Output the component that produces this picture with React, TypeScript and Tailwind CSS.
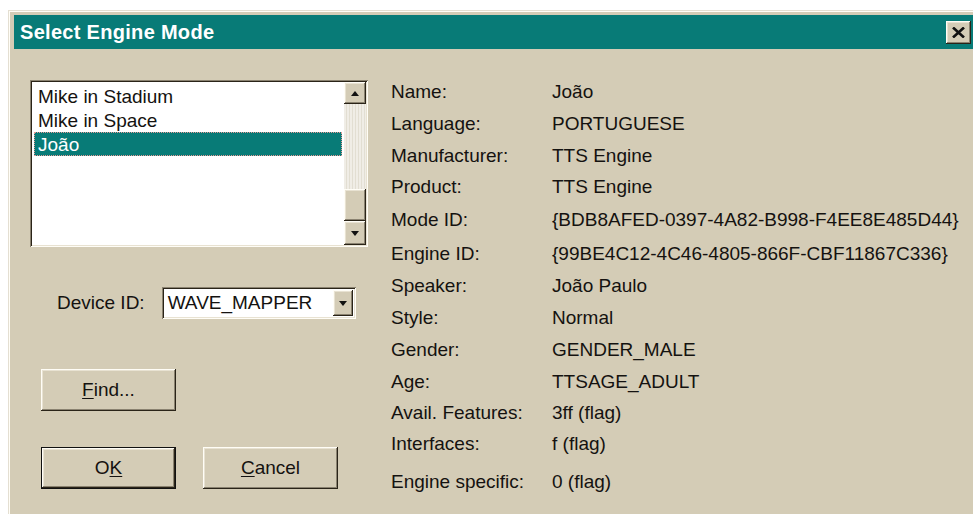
import { useState } from "react";

const raised =
  "bg-[#d4ccb6] shadow-[inset_-1px_-1px_0_#2a2418,inset_1px_1px_0_#fffdf6,inset_-2px_-2px_0_#8a8270,inset_2px_2px_0_#e8e2d2]";
const sunken =
  "shadow-[inset_1px_1px_0_#8a8270,inset_-1px_-1px_0_#fffdf6,inset_2px_2px_0_#2a2418,inset_-2px_-2px_0_#e8e2d2]";

const voices = ["Mike in Stadium", "Mike in Space", "João"];

const details = [
  { label: "Name:", value: "João", h: "h-[32px]" },
  { label: "Language:", value: "PORTUGUESE", h: "h-[32px]" },
  { label: "Manufacturer:", value: "TTS Engine", h: "h-[32px]" },
  { label: "Product:", value: "TTS Engine", h: "h-[30px]" },
  { label: "Mode ID:", value: "{BDB8AFED-0397-4A82-B998-F4EE8E485D44}", h: "h-[36px]" },
  { label: "Engine ID:", value: "{99BE4C12-4C46-4805-866F-CBF11867C336}", h: "h-[32px]" },
  { label: "Speaker:", value: "João Paulo", h: "h-[32px]" },
  { label: "Style:", value: "Normal", h: "h-[32px]" },
  { label: "Gender:", value: "GENDER_MALE", h: "h-[32px]" },
  { label: "Age:", value: "TTSAGE_ADULT", h: "h-[32px]" },
  { label: "Avail. Features:", value: "3ff (flag)", h: "h-[30px]" },
  { label: "Interfaces:", value: "f (flag)", h: "h-[32px]" },
  { label: "Engine specific:", value: "0 (flag)", h: "h-[44px]" },
];

function Arrow({ up }: { up?: boolean }) {
  return (
    <svg width="8" height="5" viewBox="0 0 8 5">
      <polygon points={up ? "4,0 8,5 0,5" : "0,0 8,0 4,5"} fill="#111" />
    </svg>
  );
}

function Button({
  children,
  primary,
  className = "",
}: {
  children: React.ReactNode;
  primary?: boolean;
  className?: string;
}) {
  return (
    <div
      className={`h-[42px] w-[135px] flex items-center justify-center ${
        primary ? "border border-[#111]" : ""
      } ${raised} ${className}`}
    >
      {children}
    </div>
  );
}

export default function App() {
  const [selected, setSelected] = useState(2);

  return (
    <div
      className="w-[973px] h-[514px] overflow-hidden bg-white pt-[10px] pl-[8px] text-[19px] text-[#141210]"
      style={{ fontFamily: '"Liberation Sans", Arial, sans-serif' }}
    >
      <div className="h-full bg-[#d4ccb6] pl-[6px] pt-[5px] shadow-[inset_1px_1px_0_#e4dfd2,inset_2px_2px_0_#fffdf6]">
        {/* title bar */}
        <div className="h-[34px] bg-[#087b77] flex items-center justify-between pl-[6px] pr-[2px]">
          <span className="text-white font-bold text-[20px] tracking-[0.3px]">Select Engine Mode</span>
          <div className={`w-[25px] h-[23px] flex items-center justify-center ${raised}`}>
            <svg width="13" height="11" viewBox="0 0 13 11">
              <path d="M1 0.5 L12 10.5 M12 0.5 L1 10.5" stroke="#111" strokeWidth="2.6" />
            </svg>
          </div>
        </div>

        <div className="flex pl-[16px]">
          {/* left column */}
          <div className="w-[338px] pt-[31px] flex flex-col">
            <div className={`h-[167px] bg-white p-[2px] flex ${sunken}`}>
              <div className="flex-1 pt-[2px] pl-[2px] pr-[2px]">
                {voices.map((v, i) => (
                  <div
                    key={v}
                    onClick={() => setSelected(i)}
                    className={`h-[24px] flex items-center pl-[4px] leading-none ${
                      selected === i
                        ? "bg-[#087b77] text-white outline-1 outline-dotted outline-[#e89a96] -outline-offset-1"
                        : ""
                    }`}
                  >
                    {v}
                  </div>
                ))}
              </div>
              <div className="w-[22px] flex flex-col">
                <div className={`h-[22px] flex items-center justify-center ${raised}`}>
                  <Arrow up />
                </div>
                <div className="flex-1 bg-[repeating-linear-gradient(90deg,#f0ede6_0px,#f0ede6_2px,#e2ded2_2px,#e2ded2_3px)]" />
                <div className={`h-[32px] ${raised}`} />
                <div className={`h-[24px] flex items-center justify-center ${raised}`}>
                  <Arrow />
                </div>
              </div>
            </div>

            <div className="mt-[40px] ml-[27px] flex items-center gap-[17px]">
              <span>Device ID:</span>
              <div className={`w-[194px] h-[32px] bg-white flex items-center p-[3px] ${sunken}`}>
                <span className="flex-1 pl-[3px]">WAVE_MAPPER</span>
                <div className={`w-[20px] h-[26px] flex items-center justify-center ${raised}`}>
                  <Arrow />
                </div>
              </div>
            </div>

            <Button className="mt-[50px] ml-[11px]">
              <span>
                <u className="underline-offset-2">F</u>ind...
              </span>
            </Button>

            <div className="mt-[36px] ml-[11px] flex gap-[27px]">
              <Button primary>
                <span>
                  O<u className="underline-offset-2">K</u>
                </span>
              </Button>
              <Button>
                <span>
                  <u className="underline-offset-2">C</u>ancel
                </span>
              </Button>
            </div>
          </div>

          {/* right column: engine details */}
          <div className="ml-[23px] pt-[27px] flex flex-col">
            {details.map((d) => (
              <div key={d.label} className={`${d.h} flex items-center whitespace-nowrap`}>
                <span className="w-[161px]">{d.label}</span>
                <span>{d.value}</span>
              </div>
            ))}
          </div>
        </div>
      </div>
    </div>
  );
}
